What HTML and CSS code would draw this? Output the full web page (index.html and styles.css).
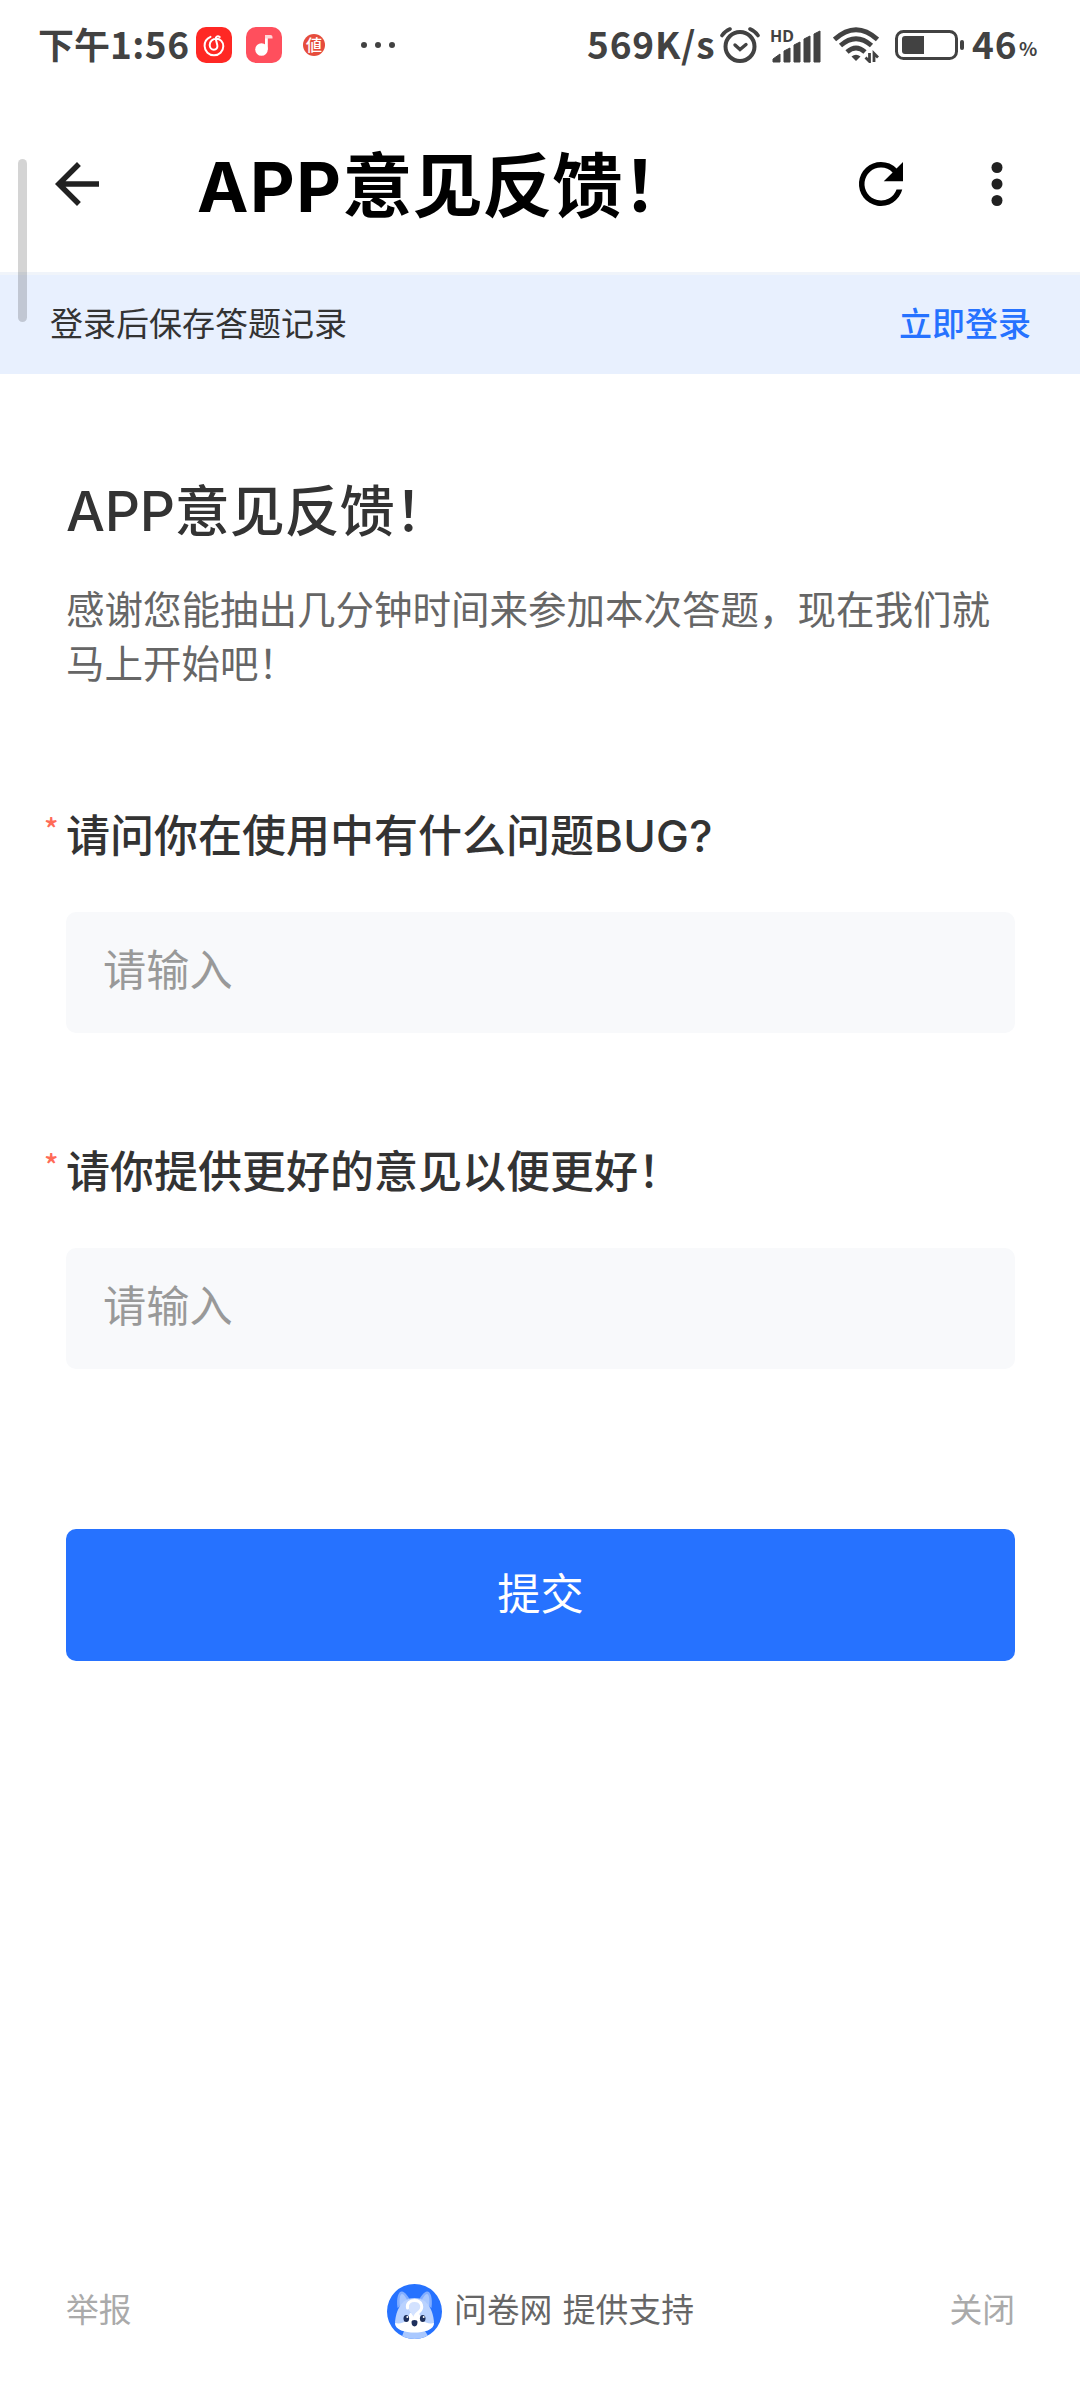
FILE: index.html
```html
<!DOCTYPE html>
<html lang="zh-CN">
<head>
<meta charset="utf-8">
<title>APP意见反馈!</title>
<link rel="stylesheet" href="styles.css">
</head>
<body>
<div class="screen">
  <div class="status">
    <span class="time"><span class="time-cn">下午</span>1:56</span>
    <svg class="app-icon" viewBox="0 0 36 36"><rect width="36" height="36" rx="10" fill="#ff2824"/><g fill="none" stroke="#fff" stroke-width="2" stroke-linecap="round" stroke-linejoin="round"><path d="M14.500 9.800C10.500 11.500 8.500 15 8.600 19c.2 5.500 4.300 9.300 9.400 9.300s9.300-4 9.300-9.100c0-4.300-3-7.500-6.800-7.500-4 0-6.800 2.600-6.800 6.300 0 2.800 1.800 4.700 4.100 4.700 2.600 0 4.100-2 3.500-4.600L19.800 12c-.5-2.300 1.700-3.600 4-2"/></g></svg>
    <svg class="app-icon app-icon-music" viewBox="0 0 36 36"><rect width="36" height="36" rx="10" fill="#ff4f5d"/><circle cx="15.500" cy="22.500" r="6.300" fill="#fff"/><path d="M19 8h2.800v14.500H19z" fill="#fff"/><path d="M19 8h5.500q2 0 2 2v1.500H19z" fill="#ffd5d8"/></svg>
    <span class="badge">値</span>
    <svg class="more-dots" viewBox="0 0 36 8" fill="#424242"><circle cx="4" cy="4" r="3"/><circle cx="18" cy="4" r="3"/><circle cx="32" cy="4" r="3"/></svg>
    <span class="speed">569K/s</span>
    <svg class="alarm" viewBox="0 0 40 37" fill="none" stroke="#424242" stroke-linecap="round"><circle cx="20" cy="19.500" r="14.500" stroke-width="4"/><path d="M15 18l5 4.500 6-5" stroke-width="3.400"/><path d="M2 8.500Q5 4 10 2M30 2q5 2 8 6.500" stroke-width="3.600"/></svg>
    <svg class="signal" viewBox="0 0 52 34" fill="#424242"><text x="0" y="12.500" class="hd">HD</text><path d="M3 33v-3l7-5v8zM14 33V22l6-3v14zM24 33V16l6-3v20zM34 33V10l6-3v26zM44 33V5l6-3v31z" stroke="#424242" stroke-width="1" stroke-linejoin="round"/></svg>
    <svg class="wifi" viewBox="0 0 46 36" fill="none" stroke="#424242" stroke-width="4.800"><path d="M1.500 12.500Q23-7 44.500 12.500"/><path d="M7.500 18.500Q23 5 38.500 18.500"/><path d="M14 25Q23 17 32 25"/><path d="M18.500 29.500Q23 26 27.500 29.500L23 34z" fill="#424242" stroke="none"/><path d="M36.500 26v8.500l-4-4M41 35v-8.500l4 4" stroke-width="2.800"/></svg>
    <svg class="battery" viewBox="0 0 70 30"><rect x="1.500" y="1.500" width="60" height="27" rx="7" fill="none" stroke="#424242" stroke-width="3"/><path d="M29 6v18H10q-3 0-3-3V9q0-3 3-3z" fill="#424242"/><rect x="65" y="10" width="4" height="10" rx="2" fill="#424242"/></svg>
    <span class="level">46</span><span class="percent">%</span>
  </div>

  <header class="appbar">
    <svg class="icon" viewBox="0 0 24 24" fill="#212121"><path d="M20 11H7.830l5.590-5.590L12 4l-8 8 8 8 1.410-1.410L7.830 13H20v-2z"/></svg>
    <h1 class="appbar-title"><span class="latin">APP</span>意见反馈！</h1>
    <svg class="icon" viewBox="0 0 24 24"><path d="M17.650 6.350A7.958 7.958 0 0 0 12 4a8 8 0 1 0 7.730 10h-2.080A6 6 0 1 1 12 6c1.660 0 3.140.690 4.220 1.780L13 11h7V4l-2.350 2.350z"/></svg>
    <svg class="icon icon-menu" viewBox="0 0 24 24" fill="#212121"><circle cx="12" cy="6" r="2"/><circle cx="12" cy="12" r="2"/><circle cx="12" cy="18" r="2"/></svg>
  </header>
  <div class="scroll-thumb"></div>

  <div class="login-bar"><span>登录后保存答题记录</span><a class="login-link">立即登录</a></div>

  <main class="form">
    <h2 class="form-title"><span class="latin">APP</span>意见反馈！</h2>
    <p class="intro">感谢您能抽出几分钟时间来参加本次答题，现在我们就马上开始吧！</p>

    <section class="question">
      <div class="label"><span class="required">*</span>请问你在使用中有什么问题<span class="latin">BUG?</span></div>
      <div class="field">请输入</div>
    </section>
    <section class="question">
      <div class="label"><span class="required">*</span>请你提供更好的意见以便更好！</div>
      <div class="field">请输入</div>
    </section>
    <div class="submit">提交</div>
  </main>

  <footer class="footer">
    <span class="foot-link">举报</span>
    <div class="brand">
      <svg class="logo" viewBox="0 0 55 55"><defs><clipPath id="disc"><circle cx="27.500" cy="27.500" r="27.500"/></clipPath></defs><g clip-path="url(#disc)"><path fill="#2672ff" d="M0 0h55v55H0z"/><path d="M17 47h21l5 8H14z" fill="#a9c8ff"/><path d="M10.500 24C9 13 12 7 15 7.500S21 12 23 16zM44.500 24C46 13 43 7 40 7.500S34 12 32 16z" fill="#83aeff"/><path d="M13 22c-1-7 0-12 2-12s5 5 6 8zM42 22c1-7 0-12-2-12s-5 5-6 8z" fill="#a9c8ff"/><path d="M27.500 14C14 14 9 27 8 38c0 7 10 10.500 19.500 10.500S47 45 47 38C46 27 41 14 27.500 14z" fill="#b9d2ff"/><path d="M8 39c4 1 9 0 12-3l3-7h9l3 7c3 3 8 4 12 3 0 7-10 9.500-19.500 9.500S8 46 8 39z" fill="#fff"/><path d="M20.500 24c-1-5 3-7.500 7-7.500 8 0 9 8 4.500 11.500-3 2-4 4-4.500 6" fill="#d3e2ff" stroke="#fff" stroke-width="3" stroke-linecap="round"/><g fill="#1d2f5c"><ellipse cx="19.300" cy="34.500" rx="2.800" ry="3.600"/><ellipse cx="35.700" cy="34.500" rx="2.800" ry="3.600"/><path d="M24.500 38q0-2 3-2t3 2q0 4-3 4.500-3-.5-3-4.500z"/></g><g fill="#fff"><circle cx="20.300" cy="33" r="1"/><circle cx="36.700" cy="33" r="1"/></g></g></svg>
      <span class="brand-text">问卷网 提供支持</span>
    </div>
    <span class="foot-link">关闭</span>
  </footer>
</div>
</body>
</html>
```

FILE: styles.css
```css
* { box-sizing: border-box; }
body {
  margin: 0;
  background: #fff;
  color: #333;
  font-family: "Noto Sans CJK SC", sans-serif;
}
h1, h2, p { margin: 0; }
svg { display: block; flex: none; }
.latin { font-family: Inter, "Noto Sans", sans-serif; line-height: 1; }
.screen {
  position: relative;
  width: 1080px;
  height: 2400px;
  display: flex;
  flex-direction: column;
  overflow: hidden;
}

/* system status bar */
.status {
  height: 90px;
  flex: none;
  display: flex;
  align-items: center;
  padding-left: 38px;
  color: #424242;
  font-size: 37px;
  font-weight: 700;
  line-height: 86px;
  white-space: nowrap;
}
.time, .speed, .level { padding-bottom: 4px; }
.time { width: 158px; letter-spacing: 0.5px; }
.time-cn { font-size: 36px; letter-spacing: 0; }
.app-icon { width: 36px; height: 36px; }
.app-icon-music { margin-left: 14px; }
.badge {
  width: 22px;
  height: 22px;
  margin-left: 21px;
  border-radius: 50%;
  background: #e64c3c;
  color: #fff;
  font-size: 16px;
  font-weight: 500;
  line-height: 21px;
  text-align: center;
}
.more-dots { width: 36px; height: 8px; margin-left: 35px; }
.speed { width: 133px; margin-left: 191px; letter-spacing: 0.8px; }
.alarm { width: 40px; height: 37px; }
.signal { width: 52px; height: 34px; margin: 1px 0 0 10px; overflow: visible; }
.hd { font: 700 16px "Noto Sans", sans-serif; }
.wifi { width: 46px; height: 36px; margin-left: 11px; }
.battery { width: 70px; height: 30px; margin-left: 16px; }
.level { width: 47px; margin-left: 7px; letter-spacing: 0.8px; }
.percent { font-size: 19px; padding-top: 6px; }

/* app bar */
.appbar {
  height: 182px;
  flex: none;
  display: flex;
  align-items: center;
  padding: 6px 50px 0 44px;
}
.icon { width: 66px; height: 66px; }
.icon-menu { margin-left: 50px; }
.appbar-title {
  flex: 1;
  margin-left: 87px;
  padding-bottom: 5px;
  color: #000;
  font-size: 70px;
  font-weight: 700;
  line-height: 100px;
}
.appbar-title .latin { letter-spacing: 1.500px; font-size: 69px; }
.scroll-thumb {
  position: absolute;
  left: 18px;
  top: 159px;
  width: 9px;
  height: 163px;
  border-radius: 5px;
  background: rgba(0, 0, 0, 0.17);
}

.login-bar {
  height: 102px;
  flex: none;
  display: flex;
  align-items: center;
  justify-content: space-between;
  padding: 0 49px 6px 50px;
  border-top: 3px solid #f0f4fa;
  background: #e8f0fe;
  font-size: 33px;
}
.login-link { color: #2672ff; font-weight: 500; }

/* questionnaire */
.form { padding: 93px 65px 0 66px; flex: 1; }
.form-title { font-size: 55px; font-weight: 500; line-height: 80px; }
.form-title .latin { letter-spacing: -0.3px; }
.intro {
  margin-top: 33px;
  color: #666;
  font-size: 38.500px;
  line-height: 54px;
}
.question { padding-top: 103px; }
.intro + .question { padding-top: 112px; }
.label {
  position: relative;
  font-size: 44px;
  font-weight: 500;
  line-height: 66px;
}
.label .latin { letter-spacing: 0.3px; }
.required {
  position: absolute;
  left: -22px;
  top: -5px;
  color: #ff6b57;
  font-size: 30px;
}
.field {
  height: 121px;
  margin-top: 46px;
  padding-left: 37px;
  border-radius: 10px;
  background: #f8f9fb;
  color: #999;
  font-size: 43.200px;
  line-height: 110px;
}
.submit {
  height: 132px;
  margin-top: 160px;
  border-radius: 10px;
  background: #2672ff;
  color: #fff;
  font-size: 43.200px;
  line-height: 125px;
  text-align: center;
}

.footer {
  height: 180px;
  flex: none;
  display: flex;
  align-items: center;
  justify-content: space-between;
  padding: 3px 65px 0 66px;
  color: #666;
  font-size: 32.800px;
}
.foot-link { color: #aaa; padding-bottom: 8px; }
.brand { display: flex; align-items: center; gap: 12px; }
.brand-text { padding-bottom: 8px; word-spacing: 3px; }
.logo { width: 55px; height: 55px; }
```
